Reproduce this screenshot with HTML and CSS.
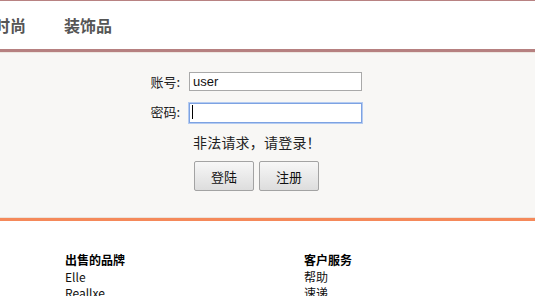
FILE: index.html
```html
<!DOCTYPE html>
<html>
<head>
<meta charset="utf-8">
<link rel="stylesheet" href="styles.css">
</head>
<body>
<div class="nav">
  <span class="nav-item">时尚</span>
  <span class="nav-item">装饰品</span>
</div>
<div class="main">
  <div class="form">
    <div class="row">
      <label class="lbl">账号:</label>
      <input class="inp" type="text" value="user">
    </div>
    <div class="row">
      <label class="lbl">密码:</label>
      <span class="inp-wrap"><input class="inp focus" type="password"><span class="caret"></span></span>
    </div>
    <div class="msg">非法请求，请登录！</div>
    <div class="btns">
      <button class="btn">登陆</button>
      <button class="btn">注册</button>
    </div>
  </div>
</div>
<div class="footer">
  <div class="col">
    <div class="hd">出售的品牌</div>
    <div>Elle</div>
    <div>Reallxe</div>
  </div>
  <div class="col">
    <div class="hd">客户服务</div>
    <div>帮助</div>
    <div>速递</div>
  </div>
</div>
</body>
</html>
```
FILE: styles.css
```css
* { box-sizing: border-box; }
html, body { margin: 0; padding: 0; background: #fff; overflow: hidden; }
body { font-family: "Liberation Sans", "Noto Sans CJK SC", sans-serif; color: #222; }
.nav {
  border-top: 1px solid #b88282;
  border-bottom: 3px solid #b68080;
  height: 52px;
  display: flex;
  align-items: center;
  gap: 38px;
  margin-left: -6px;
  padding-bottom: 1px;
}
.nav-item {
  font-family: "Noto Sans CJK SC", sans-serif;
  font-weight: bold;
  font-size: 16px;
  color: #555;
  line-height: 20px;
}
.main {
  background: #f8f7f5;
  border-top: 1px solid #ede6df;
  border-bottom: 1px solid #ece4dc;
  height: 166px;
  padding-top: 19px;
}
.form { padding-left: 150px; font-size: 13px; font-family: "Noto Sans CJK SC", sans-serif; }
.row { display: flex; align-items: center; height: 19px; margin-bottom: 11px; }
.lbl { width: 30px; text-align: right; margin-right: 9px; line-height: 19px; color: #222; }
.inp {
  width: 173px; height: 19px; border: 1px solid #a9a9a9; background: #fff;
  font-family: "Liberation Sans", sans-serif; font-size: 13px; padding: 0 3px; margin: 0;
  color: #111; outline: none;
}
.inp-wrap { position: relative; display: inline-block; height: 19px; }
.inp.focus { height: 20px; border: 1px solid #7da2e2; box-shadow: 0 0 0 1px #b4cbf1; }
.caret { position: absolute; left: 3px; top: 3px; width: 1px; height: 14px; background: #000; }
.msg { margin-left: 43px; margin-top: 8px; line-height: 20px; font-size: 14px; letter-spacing: 0.2px; color: #222; }
.btns { margin-left: 44px; margin-top: 9px; display: flex; gap: 5px; }
.btn {
  width: 60px; height: 30px; margin: 0;
  border: 1px solid #a3a3a3; border-radius: 2px;
  background: linear-gradient(#f7f7f7, #dddddd);
  font-family: "Noto Sans CJK SC", sans-serif; font-size: 13px; color: #111;
}
.footer {
  border-top: 3px solid #f5895a;
  display: flex;
  padding-left: 65px;
  padding-top: 31px;
  font-size: 12px;
  line-height: 16.5px;
  font-family: "Noto Sans CJK SC", sans-serif;
  color: #111;
}
.col { width: 239px; flex: none; }
.hd { font-weight: bold; color: #000; }
```
